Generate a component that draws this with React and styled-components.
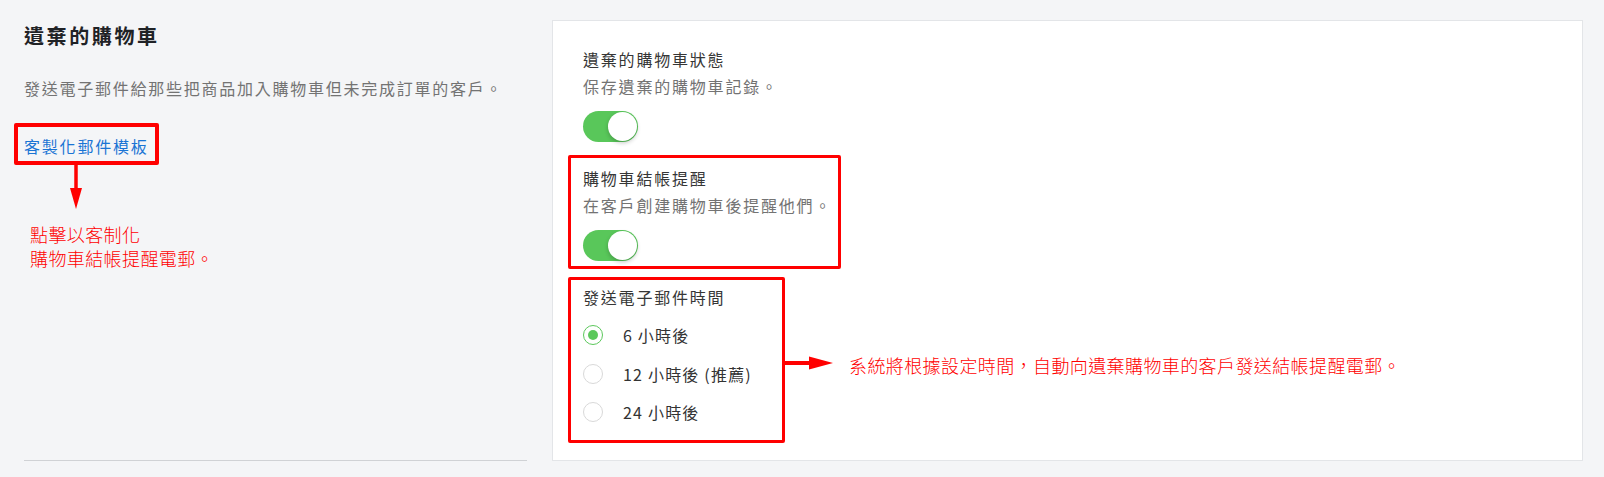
import React from "react";
import styled, { createGlobalStyle } from "styled-components";

const GlobalStyle = createGlobalStyle`
  html, body {
    margin: 0;
    padding: 0;
    background: #f4f5f7;
  }
  body {
    font-family: "Noto Sans CJK TC", "Noto Sans", sans-serif;
    color: #333;
  }
`;

const Page = styled.div`
  display: flex;
  gap: 25px;
  padding: 20px 21px 16px 24px;
  align-items: stretch;
`;

const SideColumn = styled.section`
  width: 503px;
  flex: none;
  display: flex;
  flex-direction: column;
  align-items: flex-start;
  border-bottom: 1px solid #d0d2d5;
`;

const Title = styled.h2`
  margin: 2px 0 0;
  font-size: 20px;
  line-height: 28px;
  font-weight: 600;
  letter-spacing: 2.6px;
  color: #1f2226;
`;

const Description = styled.p`
  margin: 25px 0 0;
  font-size: 16px;
  line-height: 26px;
  letter-spacing: 1.75px;
  color: #737373;
  white-space: nowrap;
`;

const Highlight = styled.div`
  box-sizing: border-box;
  border: ${(p) => p.$thick || 3}px solid #ff0000;
  border-radius: 2px;
`;

const LinkBox = styled(Highlight)`
  margin: 22px 0 0 -10px;
  padding: 7px 6px 3px 6px;
`;

const TemplateLink = styled.a`
  display: block;
  font-size: 16px;
  line-height: 24px;
  letter-spacing: 1.8px;
  color: #1a74d4;
  text-decoration: none;
  cursor: pointer;
`;

const DownArrow = styled.svg`
  display: block;
  margin-left: 45px;
`;

const Note = styled.p`
  margin: ${(p) => p.$margin || "0"};
  font-size: 18px;
  line-height: 24px;
  font-weight: 300;
  letter-spacing: 0.4px;
  color: #ff0000;
  white-space: nowrap;
`;

const Panel = styled.section`
  flex: 1;
  box-sizing: border-box;
  height: 441px;
  background: #ffffff;
  border: 1px solid #e3e5e8;
  padding: 25px 30px 0;
  display: flex;
  flex-direction: column;
  align-items: flex-start;
`;

const Label = styled.div`
  font-size: 16px;
  line-height: 27px;
  letter-spacing: 1.8px;
  color: #363636;
  white-space: nowrap;
`;

const Hint = styled.div`
  font-size: 16px;
  line-height: 27px;
  letter-spacing: 1.8px;
  color: #737373;
  white-space: nowrap;
`;

const Toggle = styled.span`
  margin-top: 11px;
  box-sizing: border-box;
  width: 55px;
  height: 31px;
  border-radius: 16px;
  background: ${(p) => (p.$on ? "#59c75a" : "#dcdcdc")};
  display: flex;
  align-items: center;
  justify-content: ${(p) => (p.$on ? "flex-end" : "flex-start")};
  padding: 1px;
  flex: none;
`;

const Knob = styled.span`
  width: 29px;
  height: 29px;
  border-radius: 50%;
  background: #ffffff;
  box-shadow: 0 2px 4px rgba(0, 0, 0, 0.22);
`;

const ReminderBox = styled(Highlight)`
  margin: 13px 0 0 -15px;
  width: 273px;
  padding: 7px 12px 5px;
  display: flex;
  flex-direction: column;
  align-items: flex-start;
`;

const TimingRow = styled.div`
  margin: 8px 0 0 -15px;
  display: flex;
  align-items: flex-start;
`;

const TimingBox = styled(Highlight)`
  width: 217px;
  height: 166px;
  padding: 4px 12px 0;
`;

const Options = styled.div`
  margin-top: 5px;
  display: flex;
  flex-direction: column;
`;

const OptionRow = styled.label`
  height: 38.5px;
  display: flex;
  align-items: center;
  gap: 20px;
  font-size: 16px;
  letter-spacing: 1.2px;
  color: #333333;
  white-space: nowrap;
  cursor: pointer;
`;

const Radio = styled.span`
  box-sizing: border-box;
  width: 20px;
  height: 20px;
  border-radius: 50%;
  border: 1px solid ${(p) => (p.$checked ? "#5cc85c" : "#d9d9d9")};
  background: #fff;
  display: flex;
  align-items: center;
  justify-content: center;
  flex: none;

  &::after {
    content: "";
    width: 10px;
    height: 10px;
    border-radius: 50%;
    background: ${(p) => (p.$checked ? "#5cc85c" : "transparent")};
  }
`;

const Callout = styled.div`
  margin-top: 79px;
  display: flex;
  align-items: flex-start;
  gap: 16px;
`;

const RightArrow = styled.svg`
  display: block;
  flex: none;
`;

const options = [
  { label: "6 小時後", checked: true },
  { label: "12 小時後 (推薦)", checked: false },
  { label: "24 小時後", checked: false },
];

export default function App() {
  return (
    <>
      <GlobalStyle />
      <Page>
        <SideColumn>
          <Title>遺棄的購物車</Title>
          <Description>發送電子郵件給那些把商品加入購物車但未完成訂單的客戶。</Description>
          <LinkBox $thick={4}>
            <TemplateLink>客製化郵件模板</TemplateLink>
          </LinkBox>
          <DownArrow width="14" height="44" viewBox="0 0 14 44">
            <line x1="7" y1="0" x2="7" y2="26" stroke="#ff0000" strokeWidth="3.5" />
            <polygon points="1,23 13,23 7,44" fill="#ff0000" />
          </DownArrow>
          <Note $margin="13px 0 0 6px">
            點擊以客制化
            <br />
            購物車結帳提醒電郵。
          </Note>
        </SideColumn>

        <Panel>
          <Label>遺棄的購物車狀態</Label>
          <Hint>保存遺棄的購物車記錄。</Hint>
          <Toggle $on>
            <Knob />
          </Toggle>

          <ReminderBox>
            <Label>購物車結帳提醒</Label>
            <Hint>在客戶創建購物車後提醒他們。</Hint>
            <Toggle $on>
              <Knob />
            </Toggle>
          </ReminderBox>

          <TimingRow>
            <TimingBox>
              <Label>發送電子郵件時間</Label>
              <Options>
                {options.map((o) => (
                  <OptionRow key={o.label}>
                    <Radio $checked={o.checked} />
                    {o.label}
                  </OptionRow>
                ))}
              </Options>
            </TimingBox>
            <Callout>
              <RightArrow width="48" height="14" viewBox="0 0 48 14">
                <line x1="0" y1="7" x2="27" y2="7" stroke="#ff0000" strokeWidth="4" />
                <polygon points="24,0.5 48,7 24,13.5" fill="#ff0000" />
              </RightArrow>
              <Note $margin="-3px 0 0 0">
                系統將根據設定時間，自動向遺棄購物車的客戶發送結帳提醒電郵。
              </Note>
            </Callout>
          </TimingRow>
        </Panel>
      </Page>
    </>
  );
}
